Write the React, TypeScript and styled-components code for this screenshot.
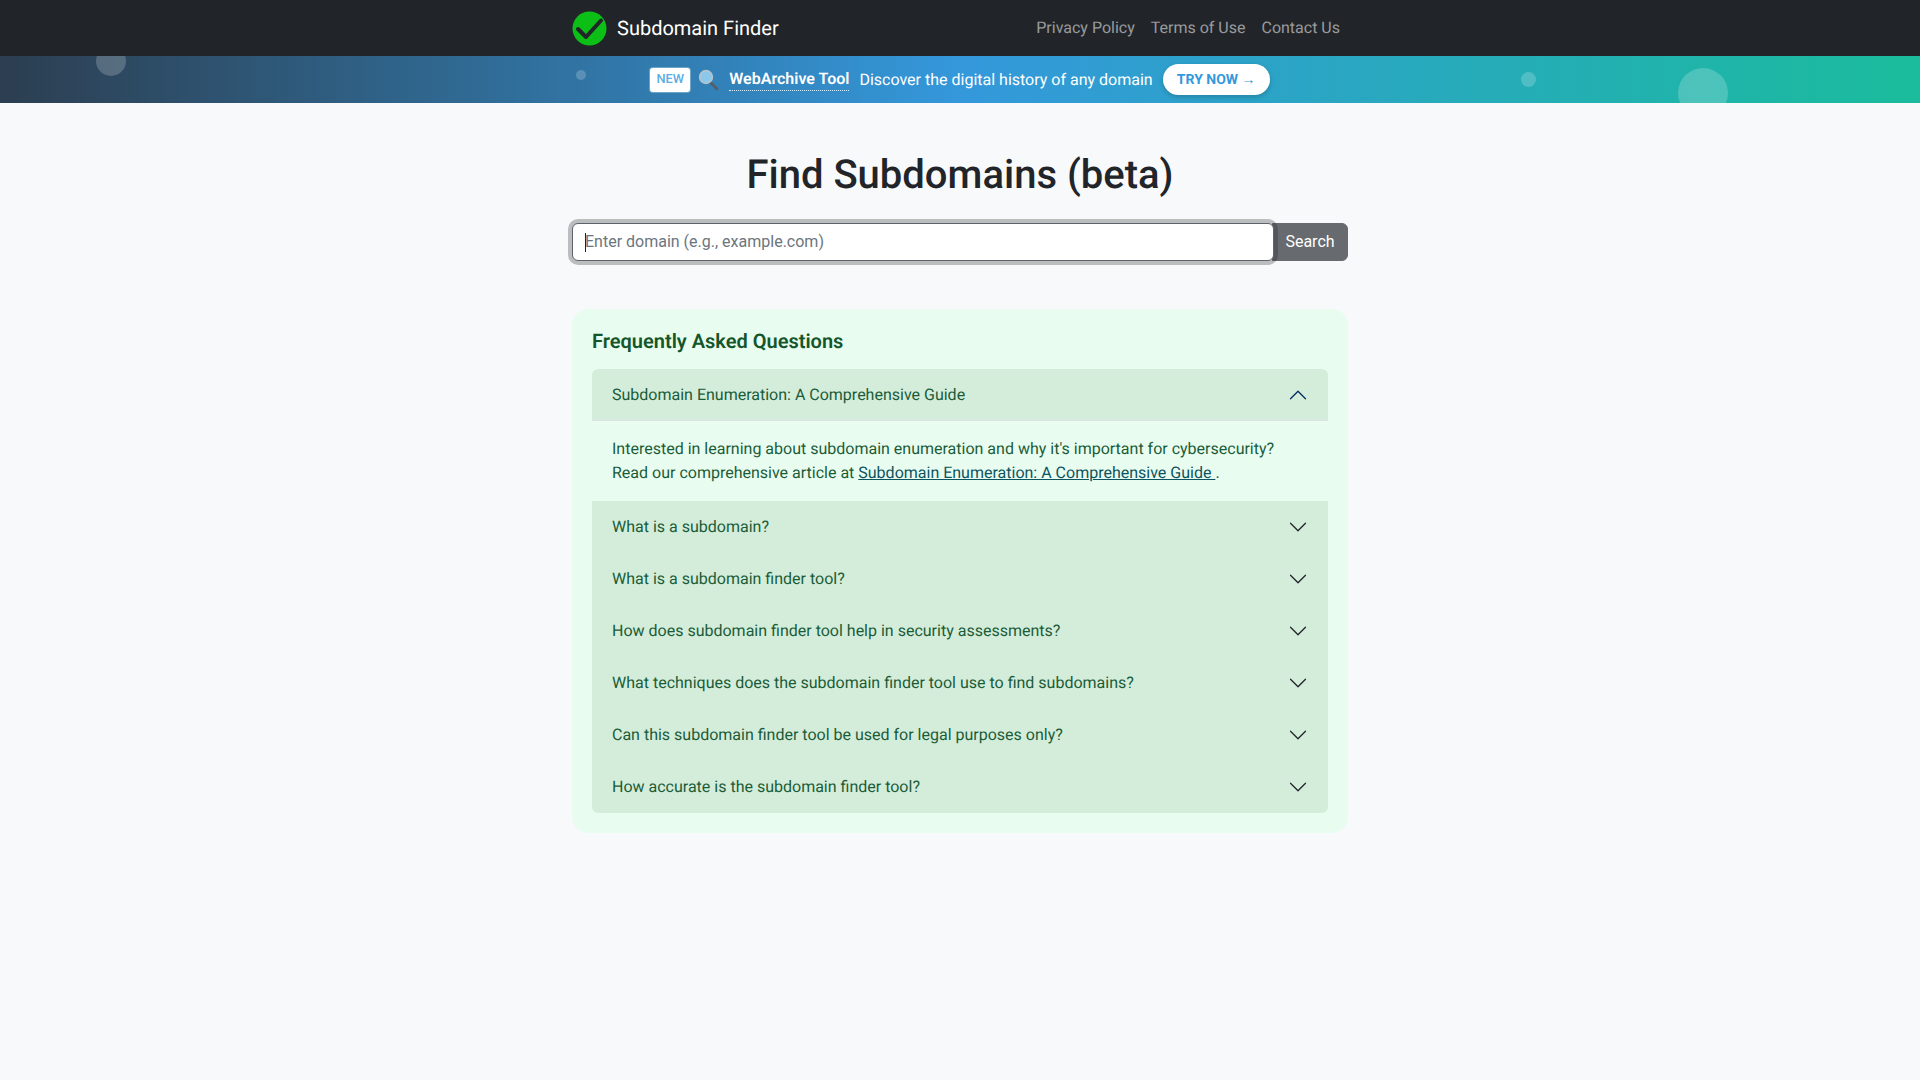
import styled, { createGlobalStyle } from "styled-components";

const GlobalStyle = createGlobalStyle`
  html, body {
    margin: 0;
    min-height: 100%;
    background: #f8f9fa;
  }
  body {
    font-family: Roboto, "Liberation Sans", sans-serif;
    font-size: 16px;
    line-height: 1.5;
    color: #212529;
    text-rendering: geometricPrecision;
  }
  * {
    box-sizing: border-box;
  }
`;

const Page = styled.div`
  min-height: 1080px;
`;

const Navbar = styled.nav`
  height: 56px;
  background: #212529;
`;

const Container = styled.div`
  width: 800px;
  margin: 0 auto;
  padding: 0 12px;
`;

const NavInner = styled(Container)`
  height: 100%;
  display: flex;
  align-items: center;
  justify-content: space-between;
`;

const Brand = styled.a`
  display: flex;
  align-items: center;
  gap: 10px;
  color: #fff;
  font-size: 20px;
  text-decoration: none;
`;

const NavLinks = styled.div`
  display: flex;
`;

const NavLink = styled.a`
  padding: 8px;
  color: rgba(255, 255, 255, 0.55);
  text-decoration: none;
`;

const Banner = styled.div`
  position: relative;
  height: 47px;
  overflow: hidden;
  display: flex;
  align-items: center;
  justify-content: center;
  gap: 10px;
  color: #fff;
  background: linear-gradient(90deg, #2c3e50, #3498db 50%, #1abc9c);
`;

const Bubble = styled.span<{ $x: number; $y: number; $size: number }>`
  position: absolute;
  left: ${(p) => p.$x}px;
  top: ${(p) => p.$y}px;
  width: ${(p) => p.$size}px;
  height: ${(p) => p.$size}px;
  border-radius: 50%;
  background: rgba(255, 255, 255, 0.2);
`;

const NewBadge = styled.span`
  width: 40px;
  height: 24px;
  margin-right: -2px;
  display: flex;
  align-items: center;
  justify-content: center;
  background: #fff;
  color: #5aaee5;
  font-size: 12.8px;
  font-weight: 500;
  border-radius: 3px;
  box-shadow: 0 0 0 1px rgba(255, 255, 255, 0.3);
`;

const ToolName = styled.span`
  font-weight: 600;
  line-height: 22px;
  border-bottom: 1px dotted rgba(255, 255, 255, 0.85);
`;

const Tagline = styled.span`
  padding-top: 1px;
`;

const TryButton = styled.a`
  height: 31px;
  width: 107px;
  padding-top: 1px;
  display: flex;
  align-items: center;
  justify-content: center;
  background: #fff;
  color: #3498db;
  font-size: 14px;
  font-weight: 700;
  border-radius: 16px;
  box-shadow: 0 2px 5px rgba(0, 0, 0, 0.2);
`;

const Title = styled.h1`
  margin: 48px 0 24px;
  font-size: 40px;
  line-height: 48px;
  font-weight: 500;
  text-align: center;
`;

const SearchGroup = styled.form`
  position: relative;
  display: flex;
  height: 38px;
  margin-bottom: 48px;
`;

const SearchInput = styled.input`
  flex: 1;
  min-width: 0;
  padding: 6px 12px;
  font: inherit;
  color: #212529;
  background: #fff;
  border: 1px solid #5c636a;
  border-radius: 6px;
  box-shadow: 0 0 0 4px rgba(33, 37, 41, 0.28);
  outline: 0;
  position: relative;
  z-index: 1;

  &::placeholder {
    color: #6c757d;
  }
`;

const Caret = styled.span`
  position: absolute;
  left: 13px;
  top: 10px;
  width: 1px;
  height: 19px;
  background: #212529;
  z-index: 2;
`;

const SearchButton = styled.button`
  width: 76px;
  margin-left: -2px;
  padding: 6px 12px;
  font: inherit;
  color: #fff;
  background: #676b6f;
  border: 1px solid #676b6f;
  border-radius: 0 6px 6px 0;
`;

const FaqCard = styled.section`
  padding: 20px;
  background: #e9fcf0;
  border-radius: 16px;
`;

const FaqTitle = styled.h2`
  margin: 0 0 16px;
  font-size: 20px;
  line-height: 24px;
  font-weight: 600;
  color: #14562a;
`;

const Accordion = styled.div`
  border-radius: 6px;
  overflow: hidden;
`;

const Question = styled.div<{ $open?: boolean }>`
  height: 52px;
  display: flex;
  align-items: center;
  justify-content: space-between;
  padding: 0 20px;
  background: #d4edda;
  color: #1a5c38;
  border-bottom: ${(p) => (p.$open ? "1px solid #dee2e6" : "0")};
`;

const Chevron = styled.svg<{ $open?: boolean }>`
  width: 20px;
  height: 20px;
  fill: ${(p) => (p.$open ? "#052c65" : "#212529")};
  transform: ${(p) => (p.$open ? "rotate(180deg)" : "none")};
`;

const Answer = styled.div`
  height: 80px;
  padding: 16px 20px;
  color: #1a5c38;
`;

const AnswerLink = styled.a`
  color: #0c5460;
  text-decoration: underline;
`;

const questions = [
  "What is a subdomain?",
  "What is a subdomain finder tool?",
  "How does subdomain finder tool help in security assessments?",
  "What techniques does the subdomain finder tool use to find subdomains?",
  "Can this subdomain finder tool be used for legal purposes only?",
  "How accurate is the subdomain finder tool?",
];

const ChevronIcon = ({ open }: { open?: boolean }) => (
  <Chevron $open={open} viewBox="0 0 16 16">
    <path
      fillRule="evenodd"
      d="M1.646 4.646a.5.5 0 0 1 .708 0L8 10.293l5.646-5.647a.5.5 0 0 1 .708.708l-6 6a.5.5 0 0 1-.708 0l-6-6a.5.5 0 0 1 0-.708z"
    />
  </Chevron>
);

const Logo = () => (
  <svg width="35" height="35" viewBox="0 0 35 35">
    <circle cx="17.5" cy="17.5" r="17" fill="#0cbf16" />
    <path d="M6 18l8 8L29 9.5" fill="none" stroke="#212529" strokeWidth="4" strokeLinecap="round" strokeLinejoin="round" />
  </svg>
);

const Magnifier = () => (
  <svg width="21" height="22" viewBox="0 0 21 22">
    <path d="M12.5 13.5l6.5 6.5" stroke="#555e66" strokeWidth="2.6" strokeLinecap="round" />
    <circle cx="8" cy="8" r="6.4" fill="#8cc8ea" stroke="#b4c4ce" strokeWidth="1.6" />
  </svg>
);

export default function App() {
  return (
    <Page>
      <GlobalStyle />
      <Navbar>
        <NavInner>
          <Brand href="#">
            <Logo />
            Subdomain Finder
          </Brand>
          <NavLinks>
            <NavLink href="#">Privacy Policy</NavLink>
            <NavLink href="#">Terms of Use</NavLink>
            <NavLink href="#">Contact Us</NavLink>
          </NavLinks>
        </NavInner>
      </Navbar>

      <Banner>
        <Bubble $x={96} $y={-10} $size={30} />
        <Bubble $x={576} $y={14} $size={10} />
        <Bubble $x={1521} $y={16} $size={15} />
        <Bubble $x={1678} $y={12} $size={50} />
        <NewBadge>NEW</NewBadge>
        <Magnifier />
        <ToolName>WebArchive Tool</ToolName>
        <Tagline>Discover the digital history of any domain</Tagline>
        <TryButton>TRY NOW →</TryButton>
      </Banner>

      <Container>
        <Title>Find Subdomains (beta)</Title>
        <SearchGroup onSubmit={(e) => e.preventDefault()}>
          <SearchInput placeholder="Enter domain (e.g., example.com)" />
          <Caret />
          <SearchButton>Search</SearchButton>
        </SearchGroup>

        <FaqCard>
          <FaqTitle>Frequently Asked Questions</FaqTitle>
          <Accordion>
            <Question $open>
              Subdomain Enumeration: A Comprehensive Guide
              <ChevronIcon open />
            </Question>
            <Answer>
              Interested in learning about subdomain enumeration and why it's important for cybersecurity?
              <br />
              Read our comprehensive article at{" "}
              <AnswerLink href="#">Subdomain Enumeration: A Comprehensive Guide </AnswerLink>.
            </Answer>
            {questions.map((q) => (
              <Question key={q}>
                {q}
                <ChevronIcon />
              </Question>
            ))}
          </Accordion>
        </FaqCard>
      </Container>
    </Page>
  );
}
